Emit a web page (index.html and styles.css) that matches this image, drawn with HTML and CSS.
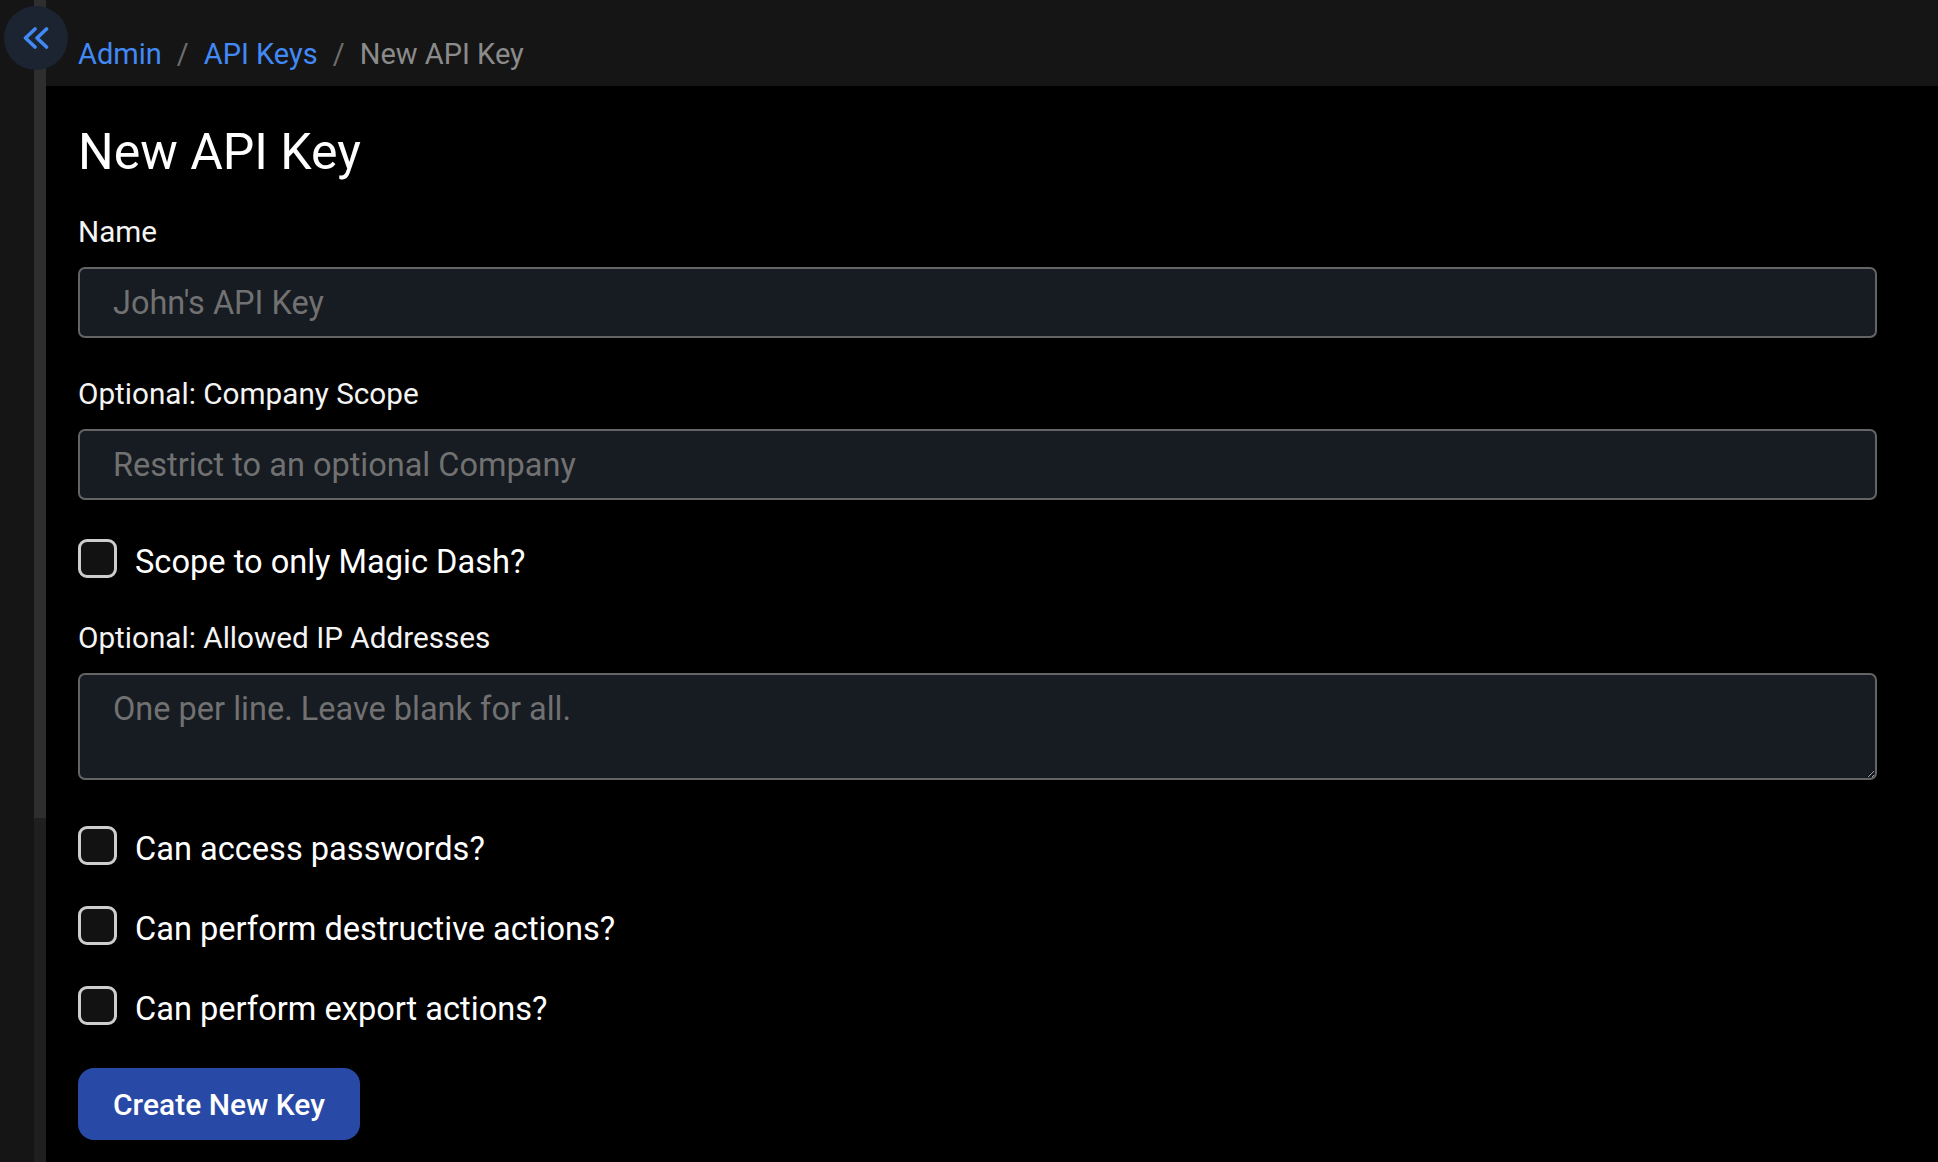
FILE: index.html
```html
<!DOCTYPE html>
<html lang="en">
<head>
<meta charset="utf-8">
<title>New API Key</title>
<link rel="stylesheet" href="styles.css">
</head>
<body>
<div class="app">
  <aside class="sidebar"></aside>
  <div class="rail"><div class="thumb"></div></div>
  <button class="collapse" aria-label="Collapse sidebar">
    <svg width="26" height="22" viewBox="0 0 26 22" fill="none" stroke="currentColor" stroke-width="3.6" stroke-linecap="round" stroke-linejoin="round">
      <path d="M12 2 L2.5 11 L12 20"/>
      <path d="M23.5 2 L14 11 L23.5 20"/>
    </svg>
  </button>
  <main class="main">
    <header class="topbar">
      <nav class="crumbs">
        <a class="crumb-link" href="#">Admin</a>
        <span class="sep">/</span>
        <a class="crumb-link" href="#">API Keys</a>
        <span class="sep">/</span>
        <span class="crumb-current">New API Key</span>
      </nav>
    </header>
    <section class="content">
      <h1 class="title">New API Key</h1>
      <form class="form">
        <label class="label" for="name">Name</label>
        <input class="field" id="name" type="text" placeholder="John's API Key">

        <label class="label" for="company">Optional: Company Scope</label>
        <input class="field" id="company" type="text" placeholder="Restrict to an optional Company">

        <label class="check check-first">
          <input class="box" type="checkbox">
          <span class="check-text">Scope to only Magic Dash?</span>
        </label>

        <label class="label label-ip" for="ips">Optional: Allowed IP Addresses</label>
        <textarea class="field area" id="ips" placeholder="One per line. Leave blank for all."></textarea>

        <div class="checks">
          <label class="check">
            <input class="box" type="checkbox">
            <span class="check-text">Can access passwords?</span>
          </label>
          <label class="check">
            <input class="box" type="checkbox">
            <span class="check-text">Can perform destructive actions?</span>
          </label>
          <label class="check">
            <input class="box" type="checkbox">
            <span class="check-text">Can perform export actions?</span>
          </label>
        </div>

        <div class="actions">
          <button class="submit" type="button">Create New Key</button>
        </div>
      </form>
    </section>
  </main>
</div>
</body>
</html>
```

FILE: styles.css
```css
* { box-sizing: border-box; }

html, body {
  margin: 0;
  padding: 0;
  background: #000;
  color: #fff;
  font-family: Roboto, "Liberation Sans", Arial, sans-serif;
  color-scheme: dark;
}

.app {
  display: flex;
  min-height: 1162px;
  position: relative;
}

.sidebar {
  width: 34px;
  flex: none;
  background: #151515;
}

.rail {
  width: 12px;
  flex: none;
  background: #1f1f1f;
}

.thumb {
  height: 818px;
  background: #2e2e2e;
}

.collapse {
  position: absolute;
  left: 4px;
  top: 6px;
  width: 64px;
  height: 64px;
  border-radius: 50%;
  border: none;
  padding: 0;
  background: #1b2430;
  color: #4289f5;
  display: flex;
  align-items: center;
  justify-content: center;
  cursor: pointer;
}

.main {
  flex: 1;
  min-width: 0;
}

.topbar {
  height: 86px;
  background: #151515;
  padding: 37px 32px 0;
}

.crumbs {
  font-size: 29px;
  line-height: 34px;
  display: flex;
  align-items: baseline;
}

.crumb-link {
  color: #4289f5;
  text-decoration: none;
}

.sep {
  color: #6d6d6d;
  padding: 0 15px;
}

.crumb-current {
  color: #8b8b8b;
}

.content {
  padding: 36px 61px 0 32px;
}

.title {
  margin: 0;
  font-size: 50px;
  line-height: 60px;
  font-weight: 400;
}

.form {
  display: flex;
  flex-direction: column;
  padding-top: 32px;
}

.label {
  font-size: 29.7px;
  line-height: 36px;
  margin-bottom: 17px;
  color: #f4f4f4;
}

.label-ip {
  margin-top: 35px;
}

.field {
  display: block;
  width: 100%;
  height: 71px;
  margin: 0 0 38px;
  padding: 0 20px 0 33px;
  background: #171b22;
  border: 2px solid #646464;
  border-radius: 7px;
  color: #fff;
  font-family: Roboto, "Liberation Sans", Arial, sans-serif;
  font-size: 32.5px;
  outline: none;
}

.field::placeholder {
  color: #717171;
  opacity: 1;
}

.area {
  height: 107px;
  padding-top: 15px;
  line-height: 38px;
  resize: vertical;
  margin-bottom: 46px;
}

.check {
  display: flex;
  align-items: flex-start;
  gap: 18px;
  font-size: 32.6px;
  line-height: 46px;
  cursor: pointer;
}

.check-first {
  margin-top: 1px;
}

.checks {
  display: flex;
  flex-direction: column;
  gap: 34px;
}

.box {
  appearance: none;
  -webkit-appearance: none;
  width: 39px;
  height: 39px;
  margin: 0;
  flex: none;
  background: #121212;
  border: 3px solid #cdcdcd;
  border-radius: 9px;
}

.actions {
  padding-top: 36px;
}

.submit {
  height: 72px;
  padding: 0 35px;
  border: none;
  border-radius: 16px;
  background: #284aa6;
  color: #fff;
  font-family: Roboto, "Liberation Sans", Arial, sans-serif;
  font-size: 30px;
  font-weight: 500;
  cursor: pointer;
}
```
